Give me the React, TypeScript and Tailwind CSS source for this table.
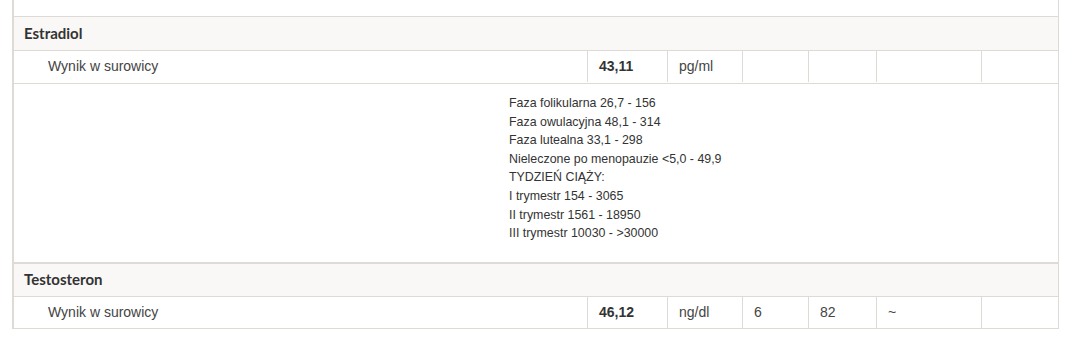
const cols = ["w-[574px]", "w-[80px]", "w-[75px]", "w-[66px]", "w-[68px]", "w-[105px]", "w-[78px]"];

interface ResultRow {
  label: string;
  value: string;
  unit: string;
  min?: string;
  max?: string;
  flag?: string;
}

function SectionHeader({ title, thick }: { title: string; thick?: boolean }) {
  return (
    <div
      className={`flex h-[35px] items-center border-b border-[#dedbd6] bg-[#f9f8f6] px-[10px] pb-[1px] ${
        thick ? "border-t-2" : "border-t"
      } border-t-[#dedbd6]`}
    >
      <span className="font-['Lato',sans-serif] text-[15px] font-bold text-[#333]">{title}</span>
    </div>
  );
}

function ResultLine({ row, last }: { row: ResultRow; last?: boolean }) {
  const cells = [row.value, row.unit, row.min ?? "", row.max ?? "", row.flag ?? "", ""];
  return (
    <div className={`flex ${last ? "h-[32px]" : "h-[33px] pb-[1px]"} border-b border-[#dedbd6] text-[14px] text-[#444]`}>
      <div className={`${cols[0]} flex shrink-0 items-center border-r border-[#dedbd6] pl-[34px]`}>{row.label}</div>
      {cells.map((c, i) => (
        <div
          key={i}
          className={`${cols[i + 1]} flex shrink-0 items-center px-[11px] ${i < 5 ? "border-r border-[#dedbd6]" : ""} ${
            i === 0 ? "font-bold text-[#333]" : ""
          }`}
        >
          {c}
        </div>
      ))}
    </div>
  );
}

const estradiolNorms = [
  "Faza folikularna 26,7 - 156",
  "Faza owulacyjna 48,1 - 314",
  "Faza lutealna 33,1 - 298",
  "Nieleczone po menopauzie <5,0 - 49,9",
  "TYDZIEŃ CIĄŻY:",
  "I trymestr 154 - 3065",
  "II trymestr 1561 - 18950",
  "III trymestr 10030 - >30000",
];

export default function App() {
  return (
    <div className="h-[348px] w-[1081px] bg-white font-['Liberation_Sans',Arial,sans-serif]">
      <div className="ml-[12px] w-[1047px] border-l-2 border-r border-[#dedbd6]">
        <div className="h-[16px]" />

        <SectionHeader title="Estradiol" />
        <ResultLine row={{ label: "Wynik w surowicy", value: "43,11", unit: "pg/ml" }} />
        <div className="h-[178px] pl-[495px] pt-[10px] text-[12.4px] leading-[18.6px] text-[#333]">
          {estradiolNorms.map((n) => (
            <div key={n}>{n}</div>
          ))}
        </div>

        <SectionHeader title="Testosteron" thick />
        <ResultLine last row={{ label: "Wynik w surowicy", value: "46,12", unit: "ng/dl", min: "6", max: "82", flag: "~" }} />
      </div>
    </div>
  );
}
